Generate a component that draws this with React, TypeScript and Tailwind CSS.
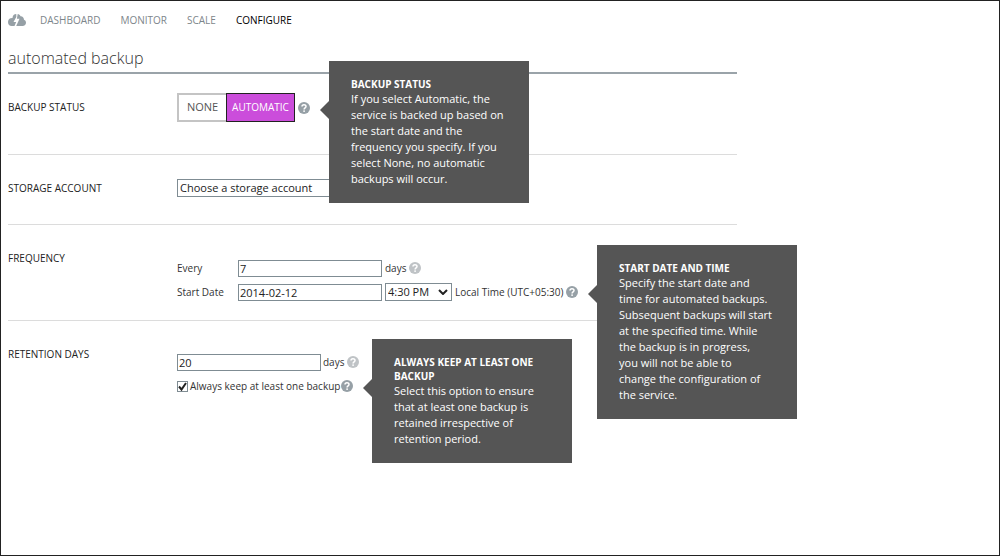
import { useState, type ReactNode } from "react";

type HelpProps = {
  label: string;
  muted?: boolean;
  title?: string;
  children?: string;
};

function Help({ label, muted, title, children }: HelpProps) {
  return (
    <span className="relative flex shrink-0">
      <button type="button" aria-label={label} className="block">
        <svg
          viewBox="0 0 12 12"
          className={muted ? "size-3 text-[#bfc3c6]" : "size-3 text-[#96a0a6]"}
          aria-hidden="true"
        >
          <circle cx="6" cy="6" r="6" fill="currentColor" />
          <path
            d="M4 4.6C4 2 8 2 8 4.5 8 5.9 6.1 5.9 6.1 7.5"
            fill="none"
            stroke="#fff"
            strokeWidth="1.5"
          />
          <rect x="5.3" y="8.4" width="1.6" height="1.5" fill="#fff" />
        </svg>
      </button>
      {title && (
        <span
          role="tooltip"
          className="absolute -top-[41px] left-[31px] z-10 block w-[200px] bg-[#555555] px-[22px] pt-4 pb-4 text-white"
        >
          <svg
            viewBox="0 0 9 18"
            className="absolute top-10 -left-[9px] h-[18px] w-[9px]"
            aria-hidden="true"
          >
            <path d="M9 0v18L0 9z" fill="#555555" />
          </svg>
          <strong className="block text-[10px] leading-[14px] font-bold whitespace-pre-line">
            {title}
          </strong>
          <span className="block text-[11px] leading-4 whitespace-pre">{children}</span>
        </span>
      )}
    </span>
  );
}

function Section({ title, height, children }: { title: string; height: string; children: ReactNode }) {
  return (
    <section className={`flex items-start ${height}`}>
      <h2 className="w-[169px] shrink-0 pt-[25px] text-[10px] leading-4 font-medium text-[#222]">
        {title}
      </h2>
      <div className="min-w-0 flex-1 pt-[19px]">{children}</div>
    </section>
  );
}

const inputClass =
  "h-[17px] w-36 shrink-0 border border-[#7f8c93] bg-white px-px text-[11px] leading-4 text-[#222] outline-none";

export default function App() {
  const [status, setStatus] = useState("AUTOMATIC");
  return (
    <div className="min-h-screen overflow-x-hidden border border-[#222] bg-white px-[7px] font-['Open_Sans','Noto_Sans',sans-serif] text-[10px] text-[#333]">
      <nav className="flex h-[38px] items-center text-[10px] text-[#7d868b]">
        <a href="#home" aria-label="Home" className="mr-3.5">
          <svg viewBox="0 0 18 12" className="h-3 w-[18px]" aria-hidden="true">
            <path
              d="M8.3 0C6 0 4.700 1.500 4.500 4 1.800 3.800 0 5.500 0 8c0 2.400 1.500 4 3.600 4h2.900l1.700-4H5.500L8.300 3zM9.700 0 8.900 4.800h2.600L8.200 12h6.400c2 0 3.400-1.400 3.400-3.300 0-1.500-.8-2.600-2-3C15.800 3.400 14.400 2 12.500 2.200 12 1 11 .1 9.700 0Z"
              fill="#96a0a6"
            />
          </svg>
        </a>
        <div className="flex gap-5">
          <a href="#dashboard">DASHBOARD</a>
          <a href="#monitor">MONITOR</a>
          <a href="#scale">SCALE</a>
          <a href="#configure" aria-current="page" className="text-black">
            CONFIGURE
          </a>
        </div>
      </nav>

      <main className="max-w-[729px]">
        <h1 className="flex h-[35px] items-center border-b-2 border-[#9aa3a9] pt-1 text-[16px] leading-6 font-light text-[#333]">
          automated backup
        </h1>

        <div className="divide-y divide-[#dcdcdc]">
          <Section title="BACKUP STATUS" height="h-[81px]">
            <div className="flex items-center">
              <div role="group" aria-label="Backup status" className="mr-[3px] flex h-[29px] w-[118px]">
                <button
                  type="button"
                  aria-pressed={status === "NONE"}
                  onClick={() => setStatus("NONE")}
                  className="w-[49px] border-2 border-r-0 border-[#c4c4c4] text-[11px] text-[#555] aria-pressed:bg-[#cb4ddb] aria-pressed:text-white"
                >
                  NONE
                </button>
                <button
                  type="button"
                  aria-pressed={status === "AUTOMATIC"}
                  onClick={() => setStatus("AUTOMATIC")}
                  className="flex-1 border border-[#c4c4c4] text-[10px] aria-pressed:border-[#222] aria-pressed:bg-[#cb4ddb] aria-pressed:text-white"
                >
                  AUTOMATIC
                </button>
              </div>
              <Help label="Help for backup status" title="BACKUP STATUS">
                {"If you select Automatic, the\nservice is backed up based on\nthe start date and the\nfrequency you specify. If you\nselect None, no automatic\nbackups will occur."}
              </Help>
            </div>
          </Section>

          <Section title="STORAGE ACCOUNT" height="h-[70px]">
            <select
              aria-label="Storage account"
              className="mt-[5px] block h-[18px] w-[200px] appearance-none border border-[#7f8c93] bg-white px-0.5 text-[11px] leading-4 text-[#222]"
            >
              <option>Choose a storage account</option>
            </select>
          </Section>

          <Section title="FREQUENCY" height="h-24">
            <div className="flex flex-col gap-1.5 pt-[15px]">
              <div className="flex h-[18px] items-center">
                <label htmlFor="every" className="w-[61px] shrink-0">
                  Every
                </label>
                <input id="every" defaultValue="7" className={inputClass} />
                <span className="ml-[3px] w-6 whitespace-nowrap">days</span>
                <Help label="Help for frequency" muted />
              </div>
              <div className="flex h-[18px] items-center">
                <label htmlFor="start" className="w-[61px] shrink-0 whitespace-nowrap">
                  Start Date
                </label>
                <input id="start" defaultValue="2014-02-12" className={inputClass} />
                <span className="relative ml-[3px] flex shrink-0">
                  <select
                    aria-label="Start time"
                    className="h-[18px] w-[67px] appearance-none border border-[#7f8c93] bg-white px-0.5 text-[11px] leading-4 text-[#222]"
                  >
                    <option>4:30 PM</option>
                  </select>
                  <svg
                    viewBox="0 0 10 6"
                    className="pointer-events-none absolute top-1.5 right-1 h-1.5 w-2.5"
                    aria-hidden="true"
                  >
                    <path d="M1 1l4 4 4-4" fill="none" stroke="#222" strokeWidth="2" />
                  </svg>
                </span>
                <span className="ml-[3px] w-[111px] shrink-0 whitespace-nowrap">
                  Local Time (UTC+05:30)
                </span>
                <Help label="Help for start date" title="START DATE AND TIME">
                  {"Specify the start date and\ntime for automated backups.\nSubsequent backups will start\nat the specified time. While\nthe backup is in progress,\nyou will not be able to\nchange the configuration of\nthe service."}
                </Help>
              </div>
            </div>
          </Section>

          <Section title="RETENTION DAYS" height="h-24">
            <div className="flex flex-col gap-1.5 pt-[13px]">
              <div className="flex h-[18px] items-center">
                <input aria-label="Retention days" defaultValue="20" className={inputClass} />
                <span className="ml-0.5 w-6 whitespace-nowrap">days</span>
                <Help label="Help for retention days" muted />
              </div>
              <div className="flex h-[18px] items-center">
                <label className="flex w-[164px] shrink-0 items-center gap-0.5 whitespace-nowrap">
                  <span className="relative flex">
                    <input
                      type="checkbox"
                      defaultChecked
                      className="peer size-[11px] appearance-none border border-[#7f8c93] bg-white"
                    />
                    <svg
                      viewBox="0 0 11 11"
                      className="pointer-events-none absolute inset-0 hidden size-[11px] peer-checked:block"
                      aria-hidden="true"
                    >
                      <path d="M2 5.5l2.5 3L9 2" fill="none" stroke="#222" strokeWidth="2" />
                    </svg>
                  </span>
                  Always keep at least one backup
                </label>
                <Help
                  label="Help for keeping one backup"
                  title={"ALWAYS KEEP AT LEAST ONE\nBACKUP"}
                >
                  {"Select this option to ensure\nthat at least one backup is\nretained irrespective of\nretention period."}
                </Help>
              </div>
            </div>
          </Section>
        </div>
      </main>
    </div>
  );
}
